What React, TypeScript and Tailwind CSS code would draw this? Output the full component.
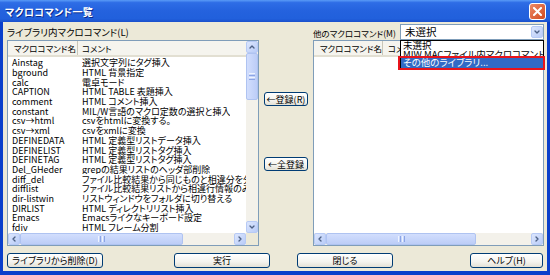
import React from 'react';
import { ChevronUp, ChevronDown, ChevronLeft, ChevronRight } from 'lucide-react';

interface Macro {
  name: string;
  comment: string;
}

const macros: Macro[] = [
  { name: 'Ainstag', comment: '選択文字列にタグ挿入' },
  { name: 'bground', comment: 'HTML 背景指定' },
  { name: 'calc', comment: '電卓モード' },
  { name: 'CAPTION', comment: 'HTML TABLE 表題挿入' },
  { name: 'comment', comment: 'HTML コメント挿入' },
  { name: 'constant', comment: 'MIL/W言語のマクロ定数の選択と挿入' },
  { name: 'csv→html', comment: 'csvをhtmlに変換する。' },
  { name: 'csv→xml', comment: 'csvをxmlに変換' },
  { name: 'DEFINEDATA', comment: 'HTML 定義型リストデータ挿入' },
  { name: 'DEFINELIST', comment: 'HTML 定義型リストタグ挿入' },
  { name: 'DEFINETAG', comment: 'HTML 定義型リストタグ挿入' },
  { name: 'Del_GHeder', comment: 'grepの結果リストのヘッダ部削除' },
  { name: 'diff_del', comment: 'ファイル比較結果から同じものと相違分を分ける' },
  { name: 'difflist', comment: 'ファイル比較結果リストから相違行情報のみ取り出す' },
  { name: 'dir-listwin', comment: 'リストウィンドウをフォルダに切り替える' },
  { name: 'DIRLIST', comment: 'HTML ディレクトリリスト挿入' },
  { name: 'Emacs', comment: 'Emacsライクなキーボード設定' },
  { name: 'fdiv', comment: 'HTML フレーム分割' },
];

// XPっぽいスクロールバーの矢印ボタン
const ArrowBtn: React.FC<{ dir: 'up' | 'down' | 'left' | 'right' }> = ({ dir }) => {
  const Icon = dir === 'up' ? ChevronUp : dir === 'down' ? ChevronDown : dir === 'left' ? ChevronLeft : ChevronRight;
  return (
    <div className="w-[12px] h-[12px] shrink-0 flex items-center justify-center rounded-[2px] border border-[#B7CAF5] bg-[linear-gradient(135deg,#DCE6FD,#B9CCF8)]">
      <Icon className="w-[8px] h-[8px] text-[#4D6185]" strokeWidth={4} />
    </div>
  );
};

const Button: React.FC<{ label: string; className?: string }> = ({ label, className }) => (
  <div
    className={`flex items-center justify-center shrink-0 whitespace-nowrap rounded-[3px] border border-[#003C74] bg-[linear-gradient(180deg,#FFFFFF_0%,#F4F3EE_60%,#E3E1D6_100%)] text-[9px] leading-none text-black ${className ?? ''}`}
  >
    {label}
  </div>
);

const Grip: React.FC<{ vertical?: boolean }> = ({ vertical }) =>
  vertical ? (
    <div className="w-[6px] flex flex-col gap-[1px]">
      <div className="h-px bg-[#EEF3FE]" />
      <div className="h-px bg-[#8CA5E6]" />
      <div className="h-px bg-[#EEF3FE]" />
      <div className="h-px bg-[#8CA5E6]" />
    </div>
  ) : (
    <div className="h-[6px] flex gap-[1px]">
      <div className="w-px bg-[#EEF3FE]" />
      <div className="w-px bg-[#8CA5E6]" />
      <div className="w-px bg-[#EEF3FE]" />
      <div className="w-px bg-[#8CA5E6]" />
    </div>
  );

const App: React.FC = () => {
  return (
    <div className="w-[550px] h-[275px] overflow-hidden flex flex-col bg-[#0A3FCB] font-['Noto_Sans_CJK_JP',sans-serif] [font-feature-settings:'palt']">
      {/* タイトルバー */}
      <div className="h-[22px] shrink-0 flex items-center justify-between pl-[5px] pr-[4px] bg-[linear-gradient(180deg,#5A9BF7_0%,#2E6DE6_12%,#2462DE_50%,#2160DC_85%,#1A50CC_100%)]">
        <span className="text-white font-bold text-[10px] tracking-[0.3px] [text-shadow:1px_1px_0_#0A2A8A]">マクロコマンド一覧</span>
        <div className="w-[17px] h-[17px] rounded-[3px] border border-white bg-[linear-gradient(135deg,#EC8A67,#D24A1F)] flex items-center justify-center">
          <svg width="9" height="9" viewBox="0 0 9 9">
            <path d="M1 1 L8 8 M8 1 L1 8" stroke="white" strokeWidth="2" strokeLinecap="square" />
          </svg>
        </div>
      </div>

      {/* 本体 */}
      <div className="flex-1 mx-[3px] mb-[4px] bg-[#ECE9D8] flex flex-col pl-[4px] pr-[3px]">
        <div className="flex h-[224px]">
          {/* 左：ライブラリ内 */}
          <div className="w-[252px] flex flex-col">
            <div className="h-[18px] flex items-end pb-[3px] text-[9.5px] leading-none whitespace-nowrap text-black">ライブラリ内マクロコマンド(L)</div>
            <div className="h-[206px] border border-[#7F9DB9] bg-white flex flex-col">
              <div className="flex flex-1 min-h-0">
                <div className="flex-1 min-w-0 overflow-hidden flex flex-col">
                  <div className="h-[16px] shrink-0 flex items-center bg-[#F5F4EE] border-b-2 border-[#E2DFD2] text-[8.5px] leading-none whitespace-nowrap">
                    <div className="w-[70px] shrink-0 pl-[6px] h-full flex items-center overflow-hidden border-r border-[#C9C6B8]">マクロコマンド名</div>
                    <div className="pl-[4px]">コメント</div>
                  </div>
                  <div className="flex flex-col pt-[1px]">
                    {macros.map((m) => (
                      <div key={m.name} className="h-[9.7px] flex items-center text-[9px] leading-none whitespace-nowrap text-black">
                        <div className="w-[74px] shrink-0 pl-[4px]">{m.name}</div>
                        <div className="overflow-hidden">{m.comment}</div>
                      </div>
                    ))}
                  </div>
                </div>
                {/* 縦スクロールバー */}
                <div className="w-[12px] shrink-0 flex flex-col bg-[#F3F1EA]">
                  <ArrowBtn dir="up" />
                  <div className="h-[47px] rounded-[2px] border border-[#AFC3F1] bg-[linear-gradient(90deg,#D2DEFD,#BCCDF7)] flex items-center justify-center">
                    <Grip vertical />
                  </div>
                  <div className="flex-1" />
                  <ArrowBtn dir="down" />
                </div>
              </div>
              {/* 横スクロールバー */}
              <div className="h-[12px] shrink-0 flex">
                <div className="flex-1 flex bg-[#F3F1EA]">
                  <ArrowBtn dir="left" />
                  <div className="w-[163px] rounded-[2px] border border-[#AFC3F1] bg-[linear-gradient(180deg,#D2DEFD,#BCCDF7)] flex items-center justify-center">
                    <Grip />
                  </div>
                  <div className="flex-1" />
                  <ArrowBtn dir="right" />
                </div>
                <div className="w-[12px] bg-[#ECE9D8]" />
              </div>
            </div>
          </div>

          {/* 中央：登録ボタン */}
          <div className="w-[54px] flex flex-col items-center">
            <Button label="←登録(R)" className="mt-[70px] w-[44px] h-[14px]" />
            <Button label="←全登録" className="mt-[51px] w-[44px] h-[14px]" />
          </div>

          {/* 右：他のマクロコマンド */}
          <div className="w-[231px] flex flex-col">
            <div className="h-[18px] flex items-start">
              <div className="h-full shrink-0 flex items-end pb-[3px] text-[8.5px] leading-none whitespace-nowrap text-black">他のマクロコマンド(M)</div>
              <div className="relative ml-auto mt-[2px] w-[144px] shrink-0 h-[16px] z-10">
                <div className="w-full h-full border border-[#7F9DB9] bg-white flex items-center">
                  <span className="flex-1 pl-[4px] text-[10.5px] leading-none">未選択</span>
                  <ArrowBtn dir="down" />
                </div>
                {/* ドロップダウン */}
                <div className="absolute left-0 top-[16px] w-[144px] border border-black bg-white flex flex-col text-[9.5px] leading-none whitespace-nowrap">
                  <div className="h-[9px] pl-[2px] flex items-center">未選択</div>
                  <div className="h-[8px] pl-[2px] overflow-hidden flex items-start">MIW MACファイル内マクロコマンド</div>
                  <div className="h-[10px] pl-[2px] flex items-center bg-[#316AC5] text-white">その他のライブラリ...</div>
                  <div className="absolute left-[-3px] right-[-2px] top-[15px] h-[14px] border-2 border-[#E8141B]" />
                </div>
              </div>
            </div>
            <div className="h-[206px] border border-[#7F9DB9] bg-white flex flex-col">
              <div className="flex-1 min-h-0 overflow-hidden">
                <div className="h-[16px] flex items-center bg-[#F5F4EE] border-b-2 border-[#E2DFD2] text-[8.5px] leading-none whitespace-nowrap">
                  <div className="w-[69px] shrink-0 pl-[6px] h-full flex items-center overflow-hidden border-r border-[#C9C6B8]">マクロコマンド名</div>
                  <div className="pl-[5px]">コメント</div>
                </div>
              </div>
              <div className="h-[12px] shrink-0 flex bg-[#F3F1EA]">
                <ArrowBtn dir="left" />
                <div className="w-[150px] rounded-[2px] border border-[#AFC3F1] bg-[linear-gradient(180deg,#D2DEFD,#BCCDF7)] flex items-center justify-center">
                  <Grip />
                </div>
                <div className="flex-1" />
                <ArrowBtn dir="right" />
              </div>
            </div>
          </div>
        </div>

        {/* 下部ボタン */}
        <div className="flex items-start pt-[7px]">
          <Button label="ライブラリから削除(D)" className="w-[96px] h-[15px]" />
          <Button label="実行" className="ml-[71px] w-[96px] h-[15px]" />
          <Button label="閉じる" className="ml-[27px] w-[96px] h-[15px]" />
          <Button label="ヘルプ(H)" className="ml-[77px] w-[73px] h-[15px]" />
        </div>
      </div>
    </div>
  );
};

export default App;
